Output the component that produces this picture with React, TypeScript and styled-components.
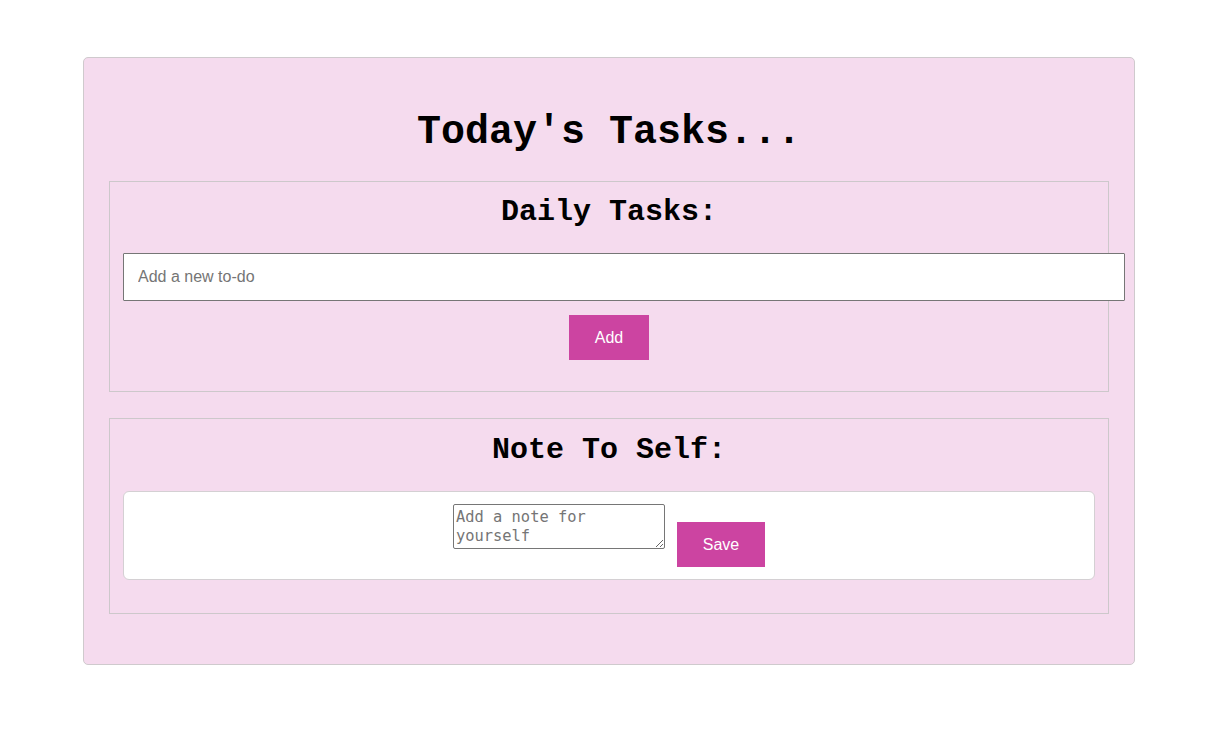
import React, { useState } from "react";
import styled, { createGlobalStyle } from "styled-components";

const GlobalStyle = createGlobalStyle`
  body {
    margin: 0;
    background: #ffffff;
    font-family: "Liberation Sans", Arial, sans-serif;
  }
`;

const Card = styled.div`
  width: 1052px;
  box-sizing: border-box;
  margin: 57px 0 0 83px;
  padding: 25px 25px 24px;
  background: #f5dbee;
  border: 1px solid #cfcacd;
  border-radius: 5px;
`;

const Title = styled.h1`
  margin: 26px 0 26px;
  padding-top: 1px;
  line-height: 45px;
  text-align: center;
  font-family: "Liberation Mono", "Courier New", monospace;
  font-size: 40px;
  font-weight: bold;
  color: #000;
`;

const Section = styled.section<{ $top: number; $bottom: number }>`
  border: 1px solid #cdc8cb;
  padding: ${(p) => p.$top}px 13px ${(p) => p.$bottom}px;
  margin-bottom: 26px;
`;

const SectionTitle = styled.h2`
  margin: 0 0 24px;
  padding-top: 1px;
  line-height: 34px;
  text-align: center;
  font-family: "Liberation Mono", "Courier New", monospace;
  font-size: 30px;
  font-weight: bold;
  color: #000;
`;

const TodoInput = styled.input`
  display: block;
  width: 100%;
  box-sizing: content-box;
  height: 46px;
  padding: 0 14px;
  margin: 0;
  border: 1px solid #767676;
  border-radius: 1px;
  background: #fff;
  font-family: "Liberation Sans", Arial, sans-serif;
  font-size: 16px;
  color: #222;
  outline: none;

  &::placeholder {
    color: #757575;
  }
`;

const Centered = styled.div`
  display: flex;
  justify-content: center;
  margin-top: 14px;
`;

const PinkButton = styled.button<{ $w: number }>`
  width: ${(p) => p.$w}px;
  height: 45px;
  border: none;
  border-radius: 0;
  background: #cc44a1;
  color: #fff;
  font-family: "Liberation Sans", Arial, sans-serif;
  font-size: 16px;
  cursor: pointer;
`;

const NoteBox = styled.div`
  display: flex;
  justify-content: center;
  align-items: flex-start;
  gap: 12px;
  padding: 12px;
  background: #fff;
  border: 1px solid #d4d0d3;
  border-radius: 6px;
`;

const NoteArea = styled.textarea`
  width: 212px;
  height: 45px;
  box-sizing: border-box;
  padding: 3px 2px 1px;
  margin: 0;
  border: 1px solid #767676;
  border-radius: 2px;
  font-family: "DejaVu Sans Mono", "Liberation Mono", monospace;
  font-size: 15.4px;
  line-height: 19px;
  color: #222;
  outline: none;

  &::placeholder {
    color: #757575;
  }
`;

const SaveButton = styled(PinkButton)`
  margin-top: 18px;
`;

const App = () => {
  const [todo, setTodo] = useState("");
  const [note, setNote] = useState("");

  return (
    <>
      <GlobalStyle />
      <Card>
        <Title>Today's Tasks...</Title>

        <Section $top={12} $bottom={31}>
          <SectionTitle>Daily Tasks:</SectionTitle>
          <TodoInput
            placeholder="Add a new to-do"
            value={todo}
            onChange={(e) => setTodo(e.target.value)}
          />
          <Centered>
            <PinkButton $w={80} onClick={() => setTodo("")}>
              Add
            </PinkButton>
          </Centered>
        </Section>

        <Section $top={13} $bottom={33}>
          <SectionTitle>Note To Self:</SectionTitle>
          <NoteBox>
            <NoteArea
              placeholder="Add a note for yourself"
              value={note}
              onChange={(e) => setNote(e.target.value)}
            />
            <SaveButton $w={88}>Save</SaveButton>
          </NoteBox>
        </Section>
      </Card>
    </>
  );
};

export default App;
